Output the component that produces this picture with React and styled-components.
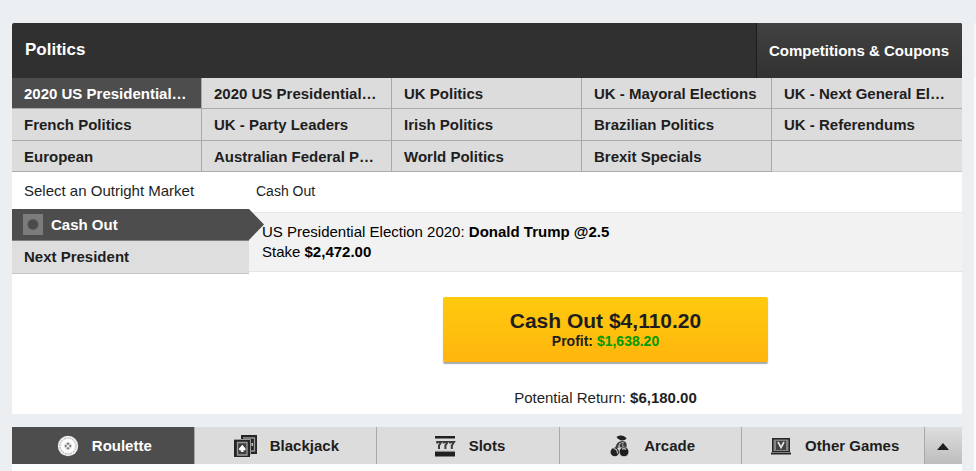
import React from 'react';
import styled, { createGlobalStyle, css } from 'styled-components';

const Global = createGlobalStyle`
  * { box-sizing: border-box; }
  body {
    margin: 0;
    background: #ebeff2;
    color: #1e1e1e;
    font: 15px/20px "Liberation Sans", Arial, sans-serif;
  }
  button { font: inherit; color: inherit; border: 0; margin: 0; cursor: pointer; }
  a { color: inherit; text-decoration: none; }
`;

const Page = styled.div`
  display: grid;
  grid-template-columns: minmax(0, 1fr) 2px;
  gap: 12px;
  padding: 23px 0 0 12px;
`;

const Main = styled.main`
  min-width: 0;
`;

const SidePanel = styled.aside`
  background: #fff;
`;

const SidePanelHeader = styled.div`
  height: 55px;
  background: #f6f7f8;
`;

const Panel = styled.section`
  background: #fff;
  border-radius: 2px 2px 0 0;
  overflow: hidden;
`;

const Header = styled.header`
  display: flex;
  justify-content: space-between;
  align-items: stretch;
  height: 55px;
  background: #303030;
  color: #fff;
`;

const Title = styled.h1`
  margin: 0;
  padding: 0 13px;
  font-size: 17px;
  line-height: 54px;
`;

const CouponsButton = styled.button`
  padding: 0 13px 0 12px;
  border-left: 1px solid #1c1c1c;
  background: linear-gradient(#414141, #323232);
  color: #fff;
  font-weight: bold;
`;

const Competitions = styled.nav`
  display: grid;
  grid-template-columns: repeat(5, 1fr);
  grid-template-rows: 31px 32px 31px;
`;

const Competition = styled.a`
  padding: 0 12px;
  border: solid #a9a9a9;
  border-width: 0 1px 1px 0;
  background: ${(p) => (p.$active ? '#4d4d4d' : '#dcdcdc')};
  color: ${(p) => (p.$active ? '#fff' : '#1e1e1e')};
  font-weight: bold;
  line-height: 32px;
  white-space: nowrap;
  overflow: hidden;
  text-overflow: ellipsis;
  &:nth-child(5n) { border-right: 0; }
`;

const EmptyCell = styled.span`
  border-bottom: 1px solid #c4c4c4;
  background: #e0e0e0;
`;

const Body = styled.div`
  display: grid;
  grid-template-columns: 237px minmax(0, 1fr);
`;

const Markets = styled.nav`
  min-width: 0;
`;

const MarketsHeading = styled.h2`
  margin: 0;
  padding: 0 12px;
  font-size: 15px;
  font-weight: normal;
  line-height: 37px;
`;

const Market = styled.a`
  position: relative;
  display: flex;
  align-items: center;
  gap: 8px;
  height: ${(p) => (p.$active ? '32px' : '33px')};
  padding: 0 12px 0 ${(p) => (p.$active ? '11px' : '12px')};
  border-bottom: 1px solid #c4c4c4;
  background: #dedede;
  font-weight: bold;
  ${(p) => p.$active && css`
    border-bottom-color: #808080;
    background: #4d4d4d;
    color: #fff;
    &::after {
      content: '';
      position: absolute;
      top: 0;
      left: 100%;
      width: 15px;
      height: 31px;
      background: #4d4d4d;
      clip-path: polygon(0 0, 100% 50%, 0 100%);
    }
  `}
`;

const Details = styled.section`
  min-width: 0;
`;

const DetailsHeading = styled.h2`
  margin: 0;
  padding: 0 7px;
  font-size: 14px;
  font-weight: normal;
  line-height: 38px;
`;

const Bet = styled.div`
  margin-top: 2px;
  padding: 9px 13px;
  border: solid #e4e4e4;
  border-width: 1px 0;
  background: #f2f2f2;
  color: #000;
`;

const Line = styled.p`
  margin: 0;
`;

const CashOut = styled.div`
  display: flex;
  flex-direction: column;
  align-items: center;
  padding: 25px 0 6px;
`;

const CashOutButton = styled.button`
  display: flex;
  flex-direction: column;
  align-items: center;
  width: 325px;
  max-width: 100%;
  height: 65px;
  margin-bottom: 26px;
  padding: 12px 0 0;
  border-radius: 2px;
  background: linear-gradient(#ffca0e, #ffb60d);
  box-shadow: 0 2px 1px #aaa;
  font-size: 21px;
  font-weight: bold;
  line-height: 24px;
`;

const Profit = styled.span`
  font-size: 14px;
  line-height: 17px;
`;

const Gain = styled.span`
  color: #009a00;
`;

const Games = styled.nav`
  display: flex;
  height: 37px;
  margin-top: 13px;
`;

const Game = styled.a`
  flex: 1 1 0;
  display: flex;
  align-items: center;
  justify-content: center;
  gap: 12px;
  padding-left: 2px;
  border-right: 1px solid #a9a9a9;
  background: ${(p) => (p.$active ? '#4d4d4d' : '#dcdcdc')};
  color: ${(p) => (p.$active ? '#fff' : '#1e1e1e')};
  font-weight: bold;
`;

const ExpandButton = styled.button`
  display: flex;
  align-items: center;
  justify-content: center;
  width: 37px;
  padding: 2px 0 0;
  background: linear-gradient(#dedede, #bdbdbd);
`;

const Footer = styled.footer`
  height: 7px;
  background: #fff;
`;

const Icon = styled.svg`
  flex: none;
  display: block;
`;

const MarketIcon = () => (
  <Icon width="20" height="21" viewBox="0 0 20 21" aria-hidden="true">
    <path fill="#7c7c7c" d="M0 0h20v21H0z" />
    <circle cx="10" cy="10.5" r="6" fill="#6c6c6c" />
    <circle cx="10" cy="10.5" r="5" fill="#4b4b4b" />
  </Icon>
);

const RouletteIcon = () => (
  <Icon width="24" height="22" viewBox="0 0 24 22" fill="none" aria-hidden="true">
    <circle cx="12" cy="11" r="10.2" fill="#f0f0f0" />
    <circle cx="12" cy="11" r="8" stroke="#a4a4a4" strokeDasharray="1.6 1.2" />
    <circle cx="12" cy="11" r="5.600" stroke="#fff" strokeWidth="2.400" />
    <path fill="#777" d="m12 7.300 3.700 3.700-3.700 3.700L8.300 11z" />
    <circle cx="12" cy="11" r="1.500" fill="#f4f4f4" />
    <path stroke="#f0f0f0" strokeWidth=".8" d="m9.500 8.500 5 5m0-5-5 5" />
  </Icon>
);

const BlackjackIcon = () => (
  <Icon width="24" height="22" viewBox="0 0 24 22" fill="none" aria-hidden="true">
    <path fill="#252525" d="M7 0h16v19H7z" />
    <path stroke="#999" strokeWidth="1.300" d="M9 3h11.500v13H17" />
    <path fill="#c6c6c6" d="M17.500 8h1.500v3h-1.500z" />
    <path fill="#252525" d="M0 4h16v18H0z" />
    <path stroke="#999" d="M0 4.500h16.500V20" />
    <path fill="#3f3f3f" stroke="#9b9b9b" strokeWidth="1.300" d="M3.500 7.500h9.500v12.500H3.500z" />
    <path fill="#fff" d="m8.300 9.800 3.200 3.700c.6 1.500-.9 2.500-2.400 1.800l.7 1.700h-3l.7-1.700c-1.500.7-3-.3-2.400-1.800z" />
  </Icon>
);

const SlotsIcon = () => (
  <Icon width="24" height="22" viewBox="0 0 24 22" aria-hidden="true">
    <path fill="#202020" d="M2 1h20v2.500H2zM2 17h20v4.500H2z" />
    <path fill="#8a8a8a" d="M2 15.800h20V17H2z" />
    <path fill="none" stroke="#3a3a3a" strokeWidth="2" d="M4.200 8.500V7h4L6 10.500V14m4.600-5.500V7h4l-2.200 3.500V14M17 8.500V7h4l-2.200 3.500V14" />
  </Icon>
);

const ArcadeIcon = () => (
  <Icon width="24" height="22" viewBox="0 0 24 22" aria-hidden="true">
    <path fill="#222" d="M8.500 2c3-2.500 8-2 10 1.800C15.500 6.500 11 6 8.500 2z" />
    <path fill="#3a3a3a" d="M9 8.500c2-2.500 6-3.500 8.500-1.500 1.500 2 1.500 4.500.5 7h-3l-3-2-3 1.500-2-.5z" />
    <path fill="none" stroke="#a5a5a5" d="M15 7c-3 1-4.500 3-5 6M15.500 7c-1 2-1 4 0 6M11.500 8v4" />
    <circle cx="6.800" cy="17" r="4.300" fill="#222" />
    <circle cx="16" cy="16.800" r="4.800" fill="#1c1c1c" stroke="#dcdcdc" strokeWidth=".6" />
    <path fill="none" stroke="#c8c8c8" strokeWidth="1.100" d="M5.500 13.500c2.500.2 4 2 4 5M14 14.300c1.200-.8 2.800-.8 4 .3" />
  </Icon>
);

const OtherIcon = () => (
  <Icon width="24" height="22" viewBox="0 0 24 22" aria-hidden="true">
    <path fill="#262626" d="M3 3h18v14H3zM2 17.500h20v2H2z" />
    <path fill="#858585" d="M4.500 4.500h15v11.500h-15z" />
    <path fill="#424242" d="M7 6h10v9H7z" />
    <path fill="none" stroke="#e4e4e4" strokeWidth="1.700" d="m9 7 3 5.500L15 7" />
  </Icon>
);

const competitions = [
  '2020 US Presidential…', '2020 US Presidential…', 'UK Politics',
  'UK - Mayoral Elections', 'UK - Next General El…',
  'French Politics', 'UK - Party Leaders', 'Irish Politics', 'Brazilian Politics', 'UK - Referendums',
  'European', 'Australian Federal P…', 'World Politics', 'Brexit Specials',
];

const games = [
  ['Roulette', RouletteIcon],
  ['Blackjack', BlackjackIcon],
  ['Slots', SlotsIcon],
  ['Arcade', ArcadeIcon],
  ['Other Games', OtherIcon],
];

export default function App() {
  return (
    <>
      <Global />
      <Page>
        <Main>
          <Panel>
            <Header>
              <Title>Politics</Title>
              <CouponsButton type="button">Competitions &amp; Coupons</CouponsButton>
            </Header>
            <Competitions aria-label="Competitions">
              {competitions.map((name, i) => (
                <Competition key={i} href="#" $active={i === 0}>{name}</Competition>
              ))}
              <EmptyCell />
            </Competitions>
            <Body>
              <Markets aria-label="Markets">
                <MarketsHeading>Select an Outright Market</MarketsHeading>
                <Market href="#" $active><MarketIcon />Cash Out</Market>
                <Market href="#">Next President</Market>
              </Markets>
              <Details>
                <DetailsHeading>Cash Out</DetailsHeading>
                <Bet>
                  <Line>US Presidential Election 2020: <b>Donald Trump @2.5</b></Line>
                  <Line>Stake <b>$2,472.00</b></Line>
                </Bet>
                <CashOut>
                  <CashOutButton type="button">
                    Cash Out $4,110.20
                    <Profit>Profit: <Gain>$1,638.20</Gain></Profit>
                  </CashOutButton>
                  <Line>Potential Return: <b>$6,180.00</b></Line>
                </CashOut>
              </Details>
            </Body>
          </Panel>
          <Games aria-label="Games">
            {games.map(([name, Glyph], i) => (
              <Game key={name} href="#" $active={i === 0}><Glyph />{name}</Game>
            ))}
            <ExpandButton type="button" aria-label="Show more games">
              <Icon width="12" height="7" viewBox="0 0 12 7" aria-hidden="true">
                <path fill="#1e1e1e" d="m6 0 6 7H0z" />
              </Icon>
            </ExpandButton>
          </Games>
          <Footer />
        </Main>
        <SidePanel>
          <SidePanelHeader />
        </SidePanel>
      </Page>
    </>
  );
}
